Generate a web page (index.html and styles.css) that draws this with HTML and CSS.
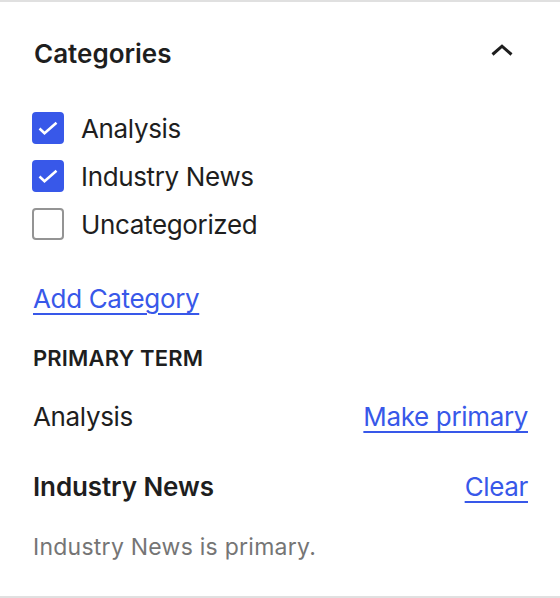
FILE: index.html
```html
<!DOCTYPE html>
<html lang="en">
<head>
<meta charset="utf-8">
<title>Categories</title>
<link rel="stylesheet" href="styles.css">
</head>
<body>
<section class="panel">
  <div class="panel-header">
    <h2 class="panel-title">Categories</h2>
    <svg class="chevron" width="22" height="12" viewBox="0 0 22 12" aria-hidden="true">
      <polyline points="1.5,10.5 11,2.2 20.5,10.5" fill="none" stroke="#1e1e1e" stroke-width="3"/>
    </svg>
  </div>

  <ul class="term-list">
    <li class="term">
      <span class="box checked">
        <svg width="32" height="32" viewBox="0 0 32 32"><polyline points="7.5,16.5 12.5,21.2 24.5,10.8" fill="none" stroke="#fff" stroke-width="2.6"/></svg>
      </span>
      <span class="term-label">Analysis</span>
    </li>
    <li class="term">
      <span class="box checked">
        <svg width="32" height="32" viewBox="0 0 32 32"><polyline points="7.5,16.5 12.5,21.2 24.5,10.8" fill="none" stroke="#fff" stroke-width="2.6"/></svg>
      </span>
      <span class="term-label">Industry News</span>
    </li>
    <li class="term">
      <span class="box"></span>
      <span class="term-label">Uncategorized</span>
    </li>
  </ul>

  <a class="link add-link" href="#">Add Category</a>

  <h3 class="section-label">PRIMARY TERM</h3>

  <div class="primary-row">
    <span class="row-name">Analysis</span>
    <a class="link" href="#">Make primary</a>
  </div>
  <div class="primary-row second">
    <span class="row-name bold">Industry News</span>
    <a class="link" href="#">Clear</a>
  </div>

  <p class="note">Industry News is primary.</p>
</section>
</body>
</html>
```

FILE: styles.css
```css
html, body {
  margin: 0;
  padding: 0;
  background: #fff;
}

body {
  font-family: Inter, "Noto Sans", "Liberation Sans", sans-serif;
  color: #1e1e1e;
  width: 560px;
}

.panel {
  box-sizing: border-box;
  height: 598px;
  border-top: 2px solid #e0e0e0;
  border-bottom: 2px solid #e0e0e0;
  padding: 0 32px 0 32px;
  display: flex;
  flex-direction: column;
  align-items: stretch;
}

.panel-header {
  display: flex;
  justify-content: space-between;
  align-items: flex-start;
  padding-top: 36px;
}

.panel-title {
  margin: 0 0 0 2px;
  font-size: 26px;
  line-height: 32px;
  font-weight: 600;
}

.chevron {
  margin-top: 6px;
  margin-right: 15px;
}

.term-list {
  list-style: none;
  margin: 42px 0 0 0;
  padding: 0;
  display: flex;
  flex-direction: column;
  gap: 16px;
}

.term {
  display: flex;
  align-items: center;
  gap: 17px;
  height: 32px;
}

.box {
  box-sizing: border-box;
  width: 32px;
  height: 32px;
  border: 2px solid #949494;
  border-radius: 4px;
  display: flex;
  align-items: center;
  justify-content: center;
  flex: none;
}

.box.checked {
  background: #3858e9;
  border-color: #3858e9;
}

.box svg {
  flex: none;
}

.term-label {
  font-size: 26px;
  line-height: 32px;
  padding-top: 2px;
  letter-spacing: -0.35px;
}

.link {
  color: #3858e9;
  font-size: 26px;
  line-height: 32px;
  letter-spacing: -0.35px;
  text-decoration: underline;
  text-decoration-thickness: 2px;
  text-underline-offset: 5px;
}

.add-link {
  align-self: flex-start;
  margin-top: 43px;
  margin-left: 1px;
}

.section-label {
  margin: 29px 0 0 1px;
  font-size: 22px;
  line-height: 28px;
  font-weight: 600;
  letter-spacing: 0.15px;
}

.primary-row {
  display: flex;
  justify-content: space-between;
  align-items: center;
  margin-top: 29px;
  font-size: 26px;
  line-height: 32px;
}

.primary-row.second {
  margin-top: 38px;
}

.row-name {
  margin-left: 1px;
  letter-spacing: -0.35px;
}

.row-name.bold {
  font-weight: 600;
  letter-spacing: -0.1px;
}

.note {
  margin: 30px 0 0 1px;
  font-size: 23px;
  line-height: 28px;
  letter-spacing: 0.25px;
  color: #757575;
}
```
